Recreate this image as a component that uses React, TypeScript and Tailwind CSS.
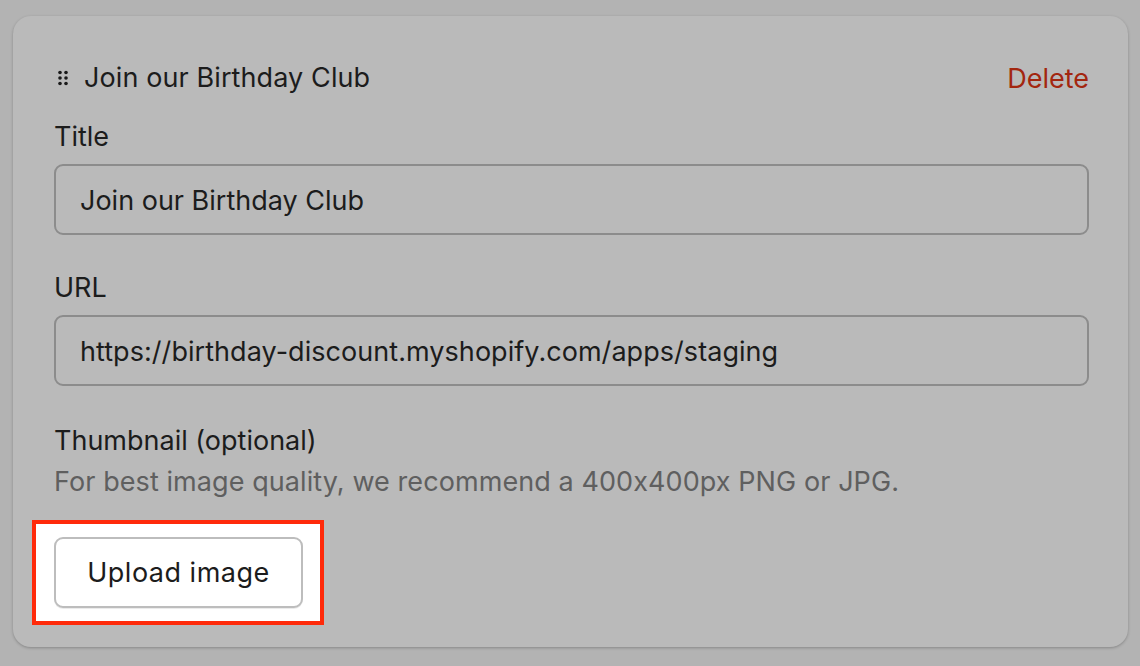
export default function App() {
  return (
    <div
      className="w-[1140px] h-[666px] bg-[#b3b3b3] pt-[16px] pl-[13px] pr-[12px] [font-feature-settings:'calt'_0]"
      style={{ fontFamily: 'Inter, "Liberation Sans", Arial, sans-serif' }}
    >
      <div className="h-[631px] rounded-[18px] bg-[#bababa] shadow-[0_1px_3px_rgba(0,0,0,0.25)] pt-[45px] pl-[41px] pr-[39px]">
        {/* header */}
        <div className="flex items-center justify-between h-[34px]">
          <div className="flex items-center gap-[16px] pl-[4px]">
            <svg width="10" height="16" viewBox="0 0 10 16" className="text-[#1a1a1a]">
              <circle cx="2" cy="2.5" r="1.8" fill="currentColor" />
              <circle cx="8" cy="2.5" r="1.8" fill="currentColor" />
              <circle cx="2" cy="8" r="1.8" fill="currentColor" />
              <circle cx="8" cy="8" r="1.8" fill="currentColor" />
              <circle cx="2" cy="13.5" r="1.8" fill="currentColor" />
              <circle cx="8" cy="13.5" r="1.8" fill="currentColor" />
            </svg>
            <span className="text-[27px] text-[#1c1c1c] tracking-[0.1px]">Join our Birthday Club</span>
          </div>
          <span className="text-[27px] text-[#a3260f] mt-[2px]">Delete</span>
        </div>

        {/* Title */}
        <div className="mt-[22px]">
          <div className="text-[27px] text-[#1c1c1c] leading-[40px]">Title</div>
          <div className="mt-[7px] h-[71px] rounded-[9px] border-2 border-[#8c8c8c] flex items-center pl-[24px] pt-[4px] text-[27px] text-[#1c1c1c]">
            Join our Birthday Club
          </div>
        </div>

        {/* URL */}
        <div className="mt-[33px]">
          <div className="text-[27px] text-[#1c1c1c] leading-[40px]">URL</div>
          <div className="mt-[7px] h-[71px] rounded-[9px] border-2 border-[#8c8c8c] flex items-center pl-[24px] pt-[4px] text-[27px] text-[#1c1c1c] tracking-[0.05px]">
            https://birthday-discount.myshopify.com/apps/staging
          </div>
        </div>

        {/* Thumbnail */}
        <div className="mt-[35px]">
          <div className="text-[27px] text-[#1c1c1c] leading-[40px]">Thumbnail (optional)</div>
          <div className="text-[27px] text-[#5f5f5f] leading-[40px] mt-[1px] tracking-[0.08px]">
            For best image quality, we recommend a 400x400px PNG or JPG.
          </div>
        </div>

        <div className="mt-[18px] -ml-[22px] w-[292px] h-[105px] border-[4px] border-[#ff2a0a] bg-white flex items-center pl-[18px]">
          <button className="w-[249px] h-[71px] rounded-[9px] border-2 border-[#bdbdbd] bg-white pt-[2px] text-[27px] text-[#1c1c1c] tracking-[0.5px] shadow-[0_1px_0_rgba(0,0,0,0.08)]">
            Upload image
          </button>
        </div>
      </div>
    </div>
  );
}
